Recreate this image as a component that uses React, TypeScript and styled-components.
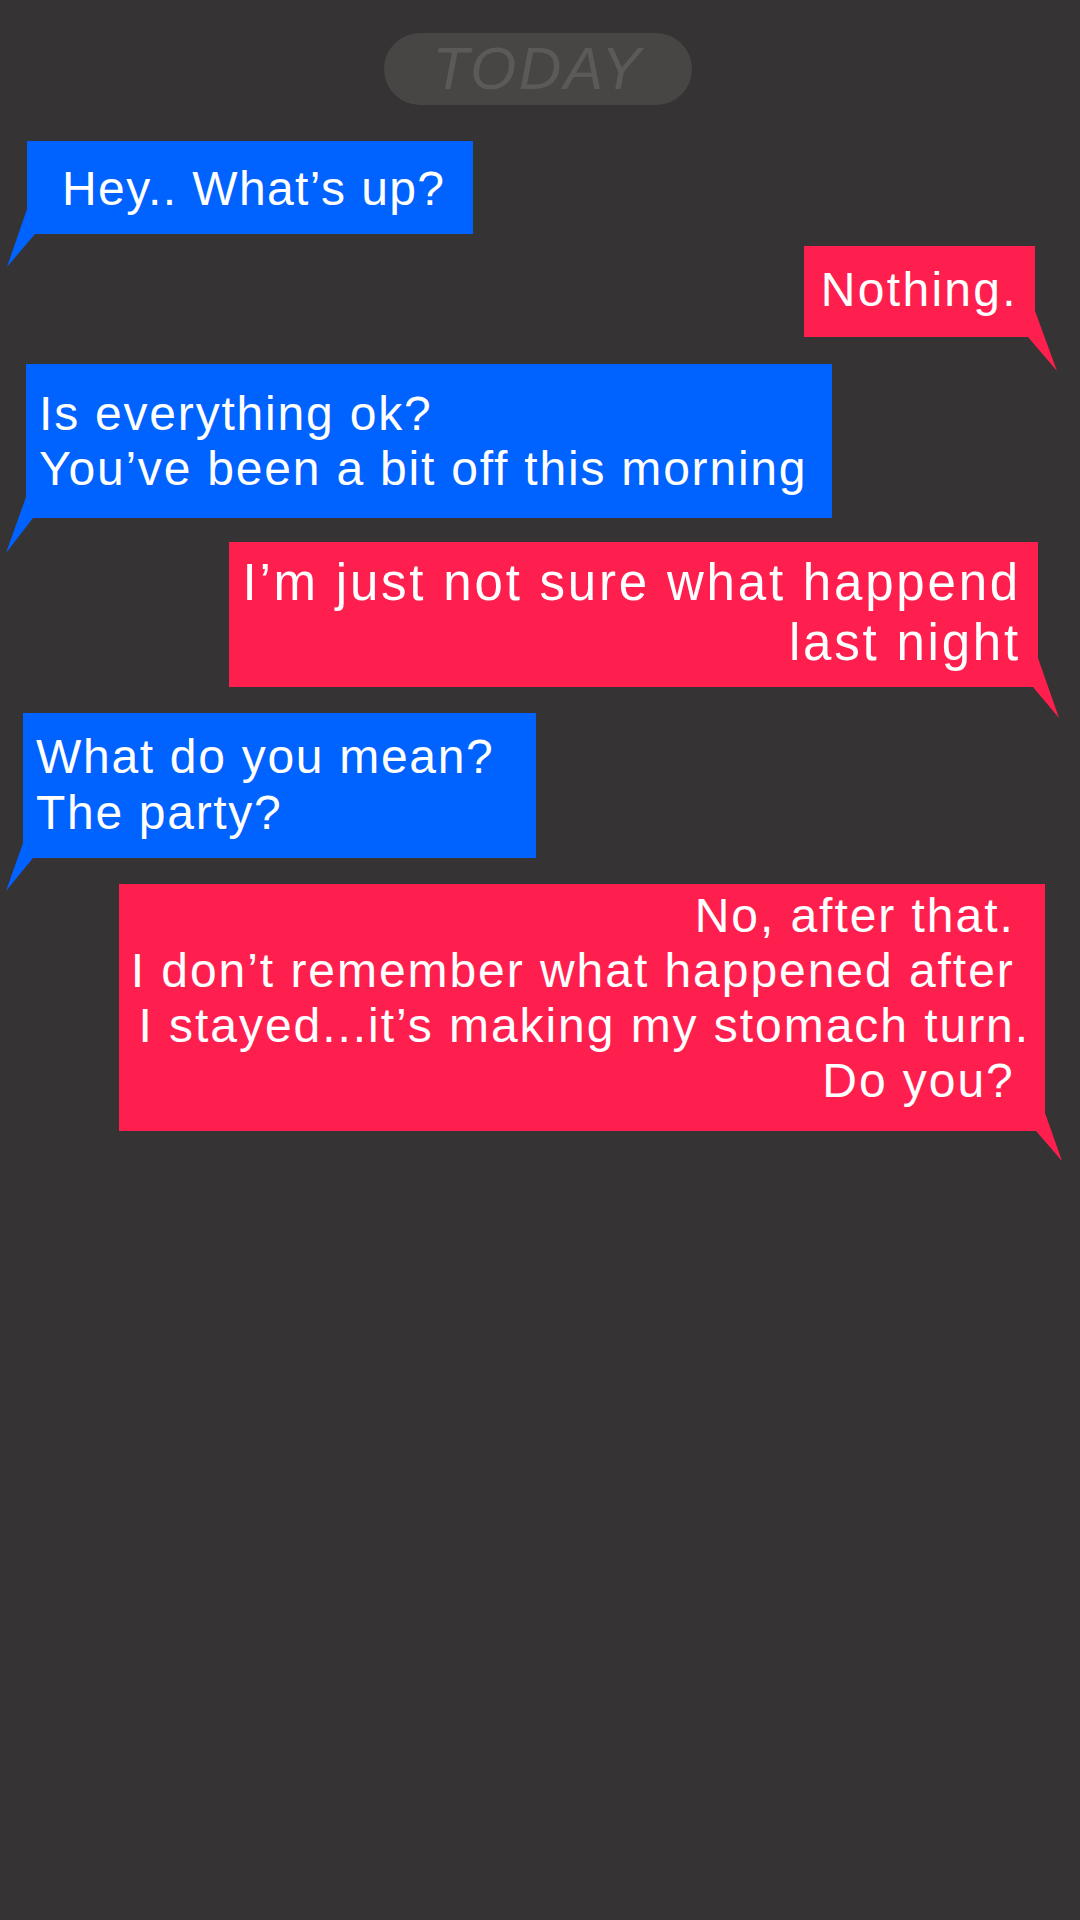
import React from "react";
import styled, { createGlobalStyle } from "styled-components";

const BG = "#363334";
const BLUE = "#0062ff";
const RED = "#ff1f4f";

const GlobalStyle = createGlobalStyle`
  html, body {
    margin: 0;
    padding: 0;
    background: ${BG};
  }
  body {
    font-family: "Liberation Sans", Arial, sans-serif;
  }
`;

const Screen = styled.main`
  width: 1080px;
  min-height: 1920px;
  box-sizing: border-box;
  background: ${BG};
  display: flex;
  flex-direction: column;
  padding-top: 33px;
  overflow: hidden;
`;

const DayPill = styled.div`
  align-self: center;
  margin-right: 4px;
  width: 308px;
  height: 72px;
  border-radius: 36px;
  background: #484644;
  display: flex;
  align-items: center;
  justify-content: center;
  font-family: "Liberation Sans", Arial, sans-serif;
  font-style: italic;
  font-size: 59px;
  letter-spacing: 2.5px;
  color: #5c5a58;
  line-height: 1;
`;

type Side = "left" | "right";

const Row = styled.div<{ $side: Side; $gap: number; $offset: number }>`
  display: flex;
  justify-content: ${(p) => (p.$side === "left" ? "flex-start" : "flex-end")};
  margin-top: ${(p) => p.$gap}px;
  padding-left: ${(p) => (p.$side === "left" ? p.$offset : 0)}px;
  padding-right: ${(p) => (p.$side === "right" ? p.$offset : 0)}px;
`;

const Bubble = styled.div<{
  $side: Side;
  $width: number;
  $size: number;
  $lh: number;
  $ls: number;
  $pad: string;
}>`
  position: relative;
  box-sizing: border-box;
  width: ${(p) => p.$width}px;
  padding: ${(p) => p.$pad};
  background: ${(p) => (p.$side === "left" ? BLUE : RED)};
  color: #ffffff;
  font-family: "Liberation Sans", Arial, sans-serif;
  font-size: ${(p) => p.$size}px;
  line-height: ${(p) => p.$lh}px;
  letter-spacing: ${(p) => p.$ls}px;
  text-align: ${(p) => (p.$side === "left" ? "left" : "right")};
  white-space: pre;
`;

const Line = styled.div`
  display: block;
`;

const TailSvg = styled.svg<{ $side: Side; $out: number; $down: number }>`
  position: absolute;
  bottom: ${(p) => -p.$down}px;
  ${(p) => (p.$side === "left" ? `left: ${-p.$out}px;` : `right: ${-p.$out}px;`)}
  overflow: visible;
  display: block;
`;

type TailCfg = { up: number; out: number; down: number; inset: number };

function Tail({ side, cfg }: { side: Side; cfg: TailCfg }) {
  const W = cfg.out + cfg.inset;
  const H = cfg.up + cfg.down;
  const pts =
    side === "left"
      ? `${cfg.out},0 0,${H} ${W},${cfg.up} ${cfg.out},${cfg.up}`
      : `${cfg.inset},0 ${W},${H} 0,${cfg.up} ${cfg.inset},${cfg.up}`;
  return (
    <TailSvg
      $side={side}
      $out={cfg.out}
      $down={cfg.down}
      width={W}
      height={H}
      viewBox={`0 0 ${W} ${H}`}
    >
      <polygon points={pts} fill={side === "left" ? BLUE : RED} />
    </TailSvg>
  );
}

type Msg = {
  side: Side;
  offset: number;
  gap: number;
  width: number;
  size: number;
  lh: number;
  ls: number;
  pad: string;
  lines: string[];
  tail: TailCfg;
};

const messages: Msg[] = [
  {
    side: "left",
    offset: 27,
    gap: 36,
    width: 446,
    size: 48,
    lh: 55,
    ls: 1.4,
    pad: "20px 0 18px 35px",
    lines: ["Hey.. What\u2019s up?"],
    tail: { up: 25, out: 20, down: 33, inset: 8 },
  },
  {
    side: "right",
    offset: 45,
    gap: 12,
    width: 231,
    size: 48,
    lh: 55,
    ls: 2.3,
    pad: "16px 17px 20px 0",
    lines: ["Nothing."],
    tail: { up: 26, out: 22, down: 34, inset: 7 },
  },
  {
    side: "left",
    offset: 26,
    gap: 27,
    width: 806,
    size: 48,
    lh: 55,
    ls: 1.8,
    pad: "22px 0 22px 13px",
    lines: ["Is everything ok?", "You\u2019ve been a bit off this morning"],
    tail: { up: 21, out: 20, down: 35, inset: 7 },
  },
  {
    side: "right",
    offset: 42,
    gap: 24,
    width: 809,
    size: 51,
    lh: 60,
    ls: 2.8,
    pad: "11px 17px 14px 0",
    lines: ["I\u2019m just not sure what happend", "last night"],
    tail: { up: 29, out: 21, down: 31, inset: 5 },
  },
  {
    side: "left",
    offset: 23,
    gap: 26,
    width: 513,
    size: 48,
    lh: 56,
    ls: 1.7,
    pad: "16px 0 17px 13px",
    lines: ["What do you mean?", "The party?"],
    tail: { up: 15, out: 17, down: 33, inset: 10 },
  },
  {
    side: "right",
    offset: 35,
    gap: 26,
    width: 926,
    size: 48,
    lh: 55,
    ls: 1.95,
    pad: "4px 15px 23px 0",
    lines: [
      "No, after that. ",
      "I don\u2019t remember what happened after ",
      "I stayed...it\u2019s making my stomach turn.",
      "Do you? ",
    ],
    tail: { up: 18, out: 17, down: 30, inset: 9 },
  },
];

export default function App() {
  return (
    <>
      <GlobalStyle />
      <Screen>
        <DayPill>TODAY</DayPill>
        {messages.map((m, i) => (
          <Row key={i} $side={m.side} $gap={m.gap} $offset={m.offset}>
            <Bubble
              $side={m.side}
              $width={m.width}
              $size={m.size}
              $lh={m.lh}
              $ls={m.ls}
              $pad={m.pad}
            >
              {m.lines.map((l, j) => (
                <Line key={j}>{l}</Line>
              ))}
              <Tail side={m.side} cfg={m.tail} />
            </Bubble>
          </Row>
        ))}
      </Screen>
    </>
  );
}
